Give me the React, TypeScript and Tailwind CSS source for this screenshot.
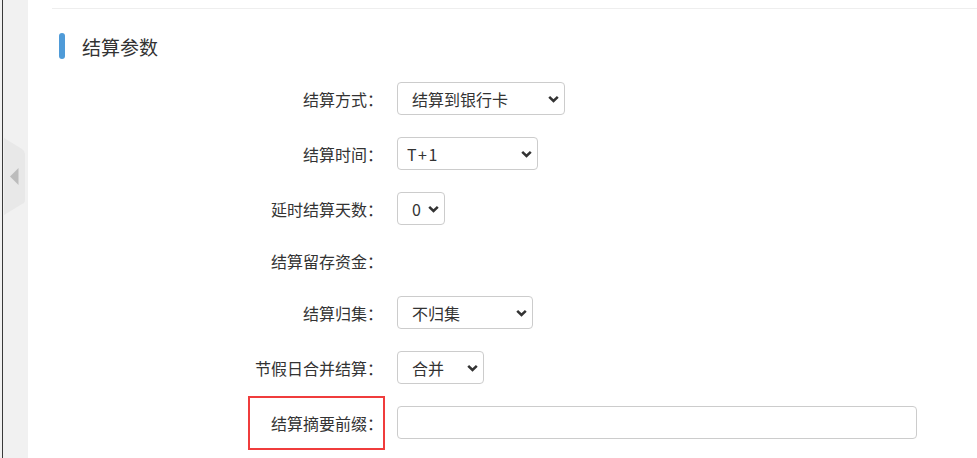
import React from 'react';

interface FieldRow {
    label: string;
    kind: 'select' | 'text' | 'input';
    value?: string;
    box?: string;
    pad?: string;
}

const rows: FieldRow[] = [
    { label: '结算方式：', kind: 'select', value: '结算到银行卡', box: 'w-[168px]', pad: 'pl-[14px]' },
    { label: '结算时间：', kind: 'select', value: 'T+1', box: 'w-[141px]', pad: 'pl-[9px] tracking-[1.5px]' },
    { label: '延时结算天数：', kind: 'select', value: '0', box: 'w-[48px]', pad: 'pl-[14px]' },
    { label: '结算留存资金：', kind: 'text' },
    { label: '结算归集：', kind: 'select', value: '不归集', box: 'w-[136px]', pad: 'pl-[14px]' },
    { label: '节假日合并结算：', kind: 'select', value: '合并', box: 'w-[87px]', pad: 'pl-[14px]' },
    { label: '结算摘要前缀：', kind: 'input' },
];

const Chevron: React.FC = () => (
    <svg width='11' height='8' viewBox='0 0 11 8' className='pointer-events-none absolute right-[6px] top-1/2 -translate-y-1/2'>
        <polyline points='1.2,1.8 5.5,6 9.8,1.8' fill='none' stroke='#333' strokeWidth='2.5' />
    </svg>
);

const SideHandle: React.FC = () => (
    <div className='relative h-full w-[28px] shrink-0 bg-[#f1f1f1]'>
        <div className='absolute left-[2px] top-0 h-full w-px bg-[#3a3a3a]' />
        {/* collapse tab on the left rail */}
        <svg width='24' height='80' viewBox='0 0 24 80' className='absolute left-[3px] top-[137px]'>
            <path d='M1 1 L19 12 Q22 14 22 17 L22 63 Q22 66 19 67 L1 78 Z' fill='#e8e8e8' />
            <path d='M7 39.5 L15.5 31 L15.5 48 Z' fill='#bcbcbc' />
        </svg>
    </div>
);

const App: React.FC = () => {
    return (
        <div
            className='flex h-[458px] w-full overflow-hidden bg-white text-[#333]'
            style={{ fontFamily: '"Microsoft YaHei", "Noto Sans CJK SC", "Liberation Sans", sans-serif' }}
        >
            <SideHandle />

            <div className='flex-1 pt-[8px]'>
                <div className='ml-[24px] h-px bg-[#eeeeee]' />

                <div className='mt-[24px] flex h-[26px] items-center pl-[31px]'>
                    <span className='h-[26px] w-[6px] rounded-full bg-[#4f9bd8]' />
                    <h2 className='ml-[17px] text-[19px] leading-none font-normal'>结算参数</h2>
                </div>

                <div className='mt-[23px] flex flex-col gap-[22px]'>
                    {rows.map((row, index) => (
                        <div key={index} className={`relative flex items-center ${row.kind === 'text' ? 'h-[27px]' : 'h-[33px]'}`}>
                            <label className='w-[355px] text-right text-[16px] leading-none'>{row.label}</label>
                            {row.kind === 'select' && (
                                <div className={`relative ml-[14px] h-[33px] ${row.box}`}>
                                    <select
                                        defaultValue={row.value}
                                        className={`h-full w-full appearance-none rounded-[4px] border border-[#cccccc] bg-white pr-5 text-[16px] text-[#333] outline-none ${row.pad}`}
                                    >
                                        <option value={row.value}>{row.value}</option>
                                    </select>
                                    <Chevron />
                                </div>
                            )}
                            {row.kind === 'input' && (
                                <>
                                    <input
                                        type='text'
                                        className='ml-[14px] h-[33px] w-[520px] rounded-[4px] border border-[#cccccc] bg-white px-3 text-[16px] outline-none'
                                    />
                                    {/* highlight box around the label */}
                                    <div className='pointer-events-none absolute left-[220px] top-[-10px] h-[54px] w-[137px] border-2 border-[#f03c3c]' />
                                </>
                            )}
                        </div>
                    ))}
                </div>
            </div>
        </div>
    );
};

export default App;
